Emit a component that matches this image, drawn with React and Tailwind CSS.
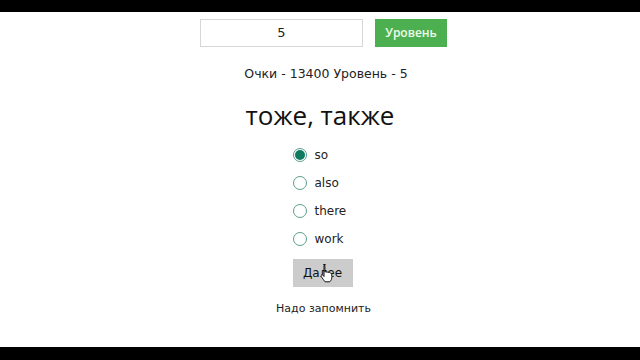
import React from 'react';

const options = ['so', 'also', 'there', 'work'];

const Radio = ({ checked }) => (
  <span className="w-[14px] h-[14px] rounded-full border border-[#5a9e8e] flex items-center justify-center bg-white shrink-0">
    {checked && <span className="w-[10px] h-[10px] rounded-full bg-[#0e7a5f]" />}
  </span>
);

const App = () => {
  return (
    <div className="w-[640px] h-[360px] flex flex-col bg-white overflow-hidden" style={{ fontFamily: '"DejaVu Sans", Verdana, sans-serif' }}>
      <div className="h-[12px] bg-black shrink-0" />
      <div className="flex-1 flex flex-col items-center">
        <div className="flex items-center gap-[12px] mt-[7px] ml-[7px]">
          <div className="w-[163px] h-[28px] border border-[#d6d6d6] flex items-center justify-center text-[13px] text-[#222]">5</div>
          <button className="w-[72px] h-[28px] bg-[#4caf50] text-[#eefbe9] text-[12px] font-semibold" style={{ fontFamily: '"Open Sans", sans-serif' }}>Уровень</button>
        </div>
        <div className="mt-[19px] ml-[12px] text-[12.5px] text-[#222] leading-[15px]">Очки - 13400 Уровень - 5</div>
        <div className="mt-[19px] text-[26px] text-[#111] leading-[30px]" style={{ fontFamily: '"Open Sans", sans-serif' }}>тоже, также</div>
        <div className="mt-[18px] flex flex-col gap-[14px] ml-[5px] w-[60px]">
          {options.map((o, i) => (
            <div key={o} className="flex items-center gap-[8px] h-[14px]">
              <Radio checked={i === 0} />
              <span className="text-[12px] text-[#222]">{o}</span>
            </div>
          ))}
        </div>
        <div className="relative mt-[13px] ml-[5px]">
          <button className="w-[60px] h-[28px] bg-[#cccccc] text-[12px] text-[#111]">Далее</button>
          <svg className="absolute left-[28px] top-[4px]" width="14" height="20" viewBox="0 0 14 20">
            <path d="M4 1.5c.8 0 1.4.6 1.4 1.4v6l.4-.1c.6-.3 1.3 0 1.6.5.5-.4 1.3-.3 1.7.2.5-.3 1.2-.2 1.6.3l.2.3c.4-.1.9.1 1.1.5.2.6.4 1.7.4 3 0 2.2-.8 4-2.2 5.2H5.6c-.8-.8-2.6-3.5-3.8-5.2-.5-.7-.3-1.4.3-1.7.6-.3 1.2 0 1.6.5l.8 1.1V2.9c0-.8.6-1.4 1.4-1.4z" fill="#fff" stroke="#111" strokeWidth="1" transform="translate(-1.5 0)" />
          </svg>
        </div>
        <div className="mt-[14px] ml-[7px] text-[11px] text-[#222]">Надо запомнить</div>
      </div>
      <div className="h-[13px] bg-black shrink-0" />
    </div>
  );
};

export default App;
